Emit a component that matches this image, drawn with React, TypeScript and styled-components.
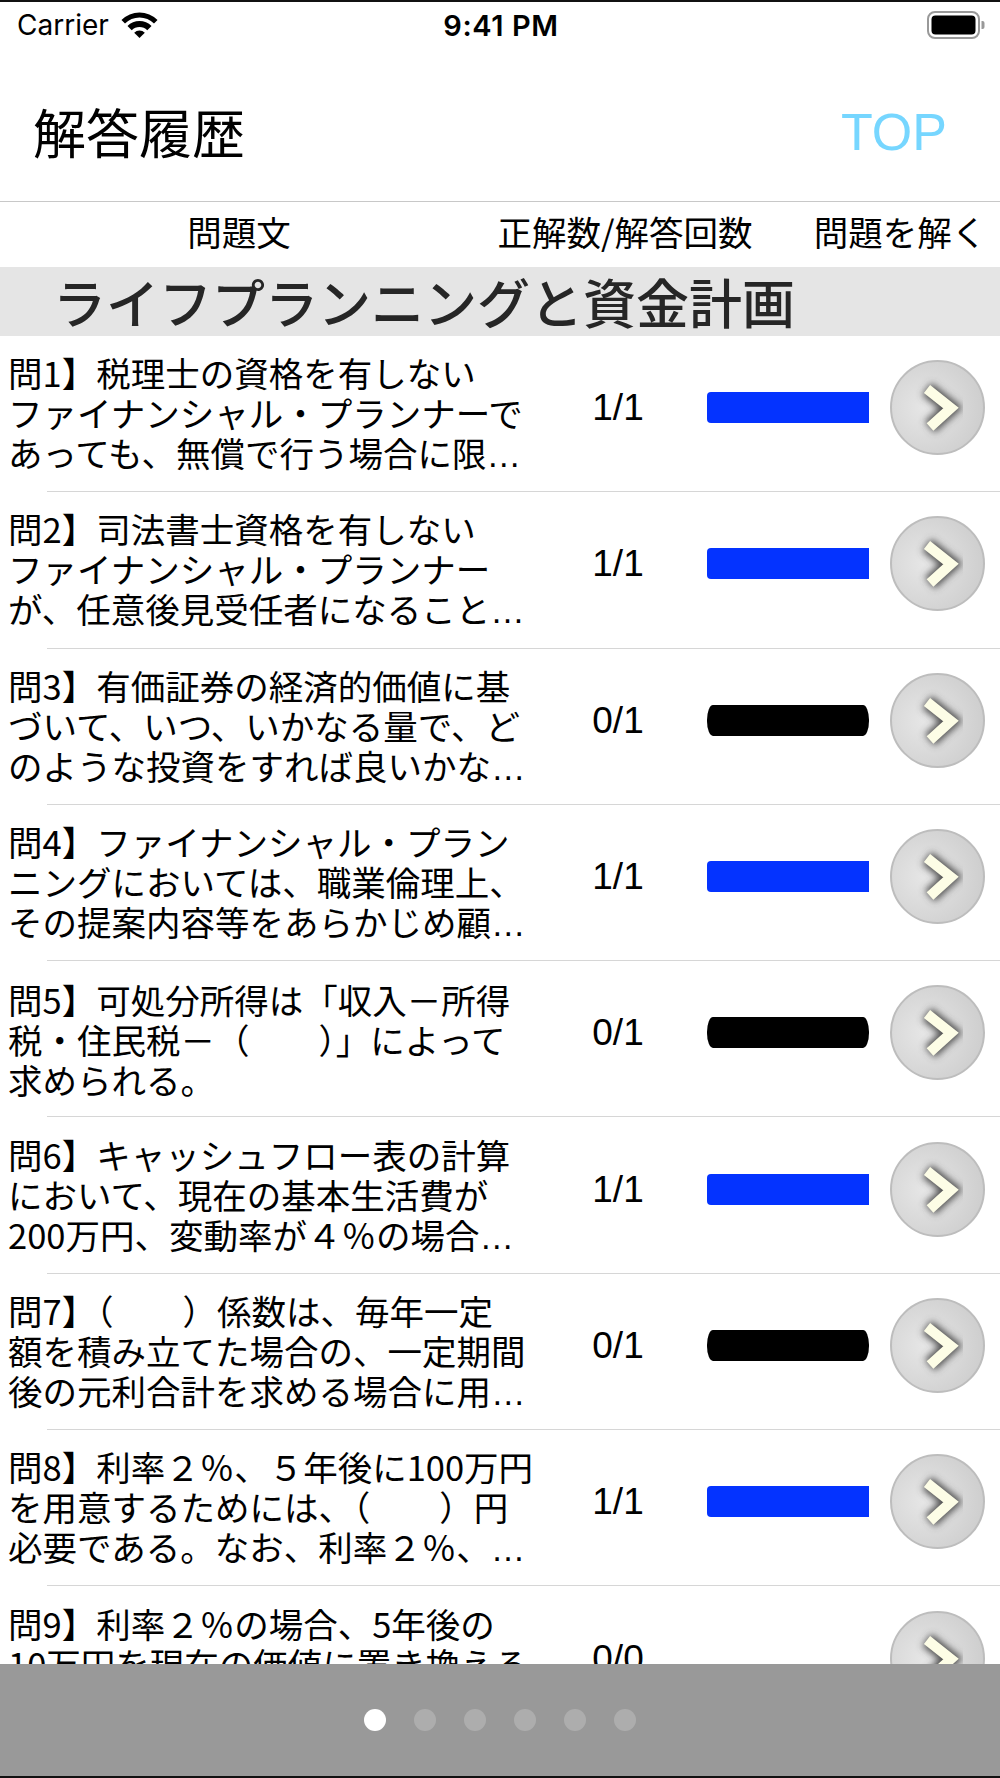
import React from "react";
import styled, { createGlobalStyle } from "styled-components";

const JP_FONT = `"Noto Sans CJK JP", "Noto Sans", sans-serif`;
const UI_FONT = `Inter, "Liberation Sans", sans-serif`;
const NUM_FONT = `"Liberation Sans", Arial, sans-serif`;

const ELLIPSIS = "…";

const Colors = {
  FRAME: "#111111",
  TEXT: "#000000",
  SECTION_TEXT: "#262626",
  SECTION_BG: "#e5e5e5",
  NAV_LINE: "#c8c8c8",
  ROW_LINE: "#d6d6d6",
  SKY: "#76d6ff",
  BLUE: "#0433ff",
  BLACK: "#000000",
  PAGER_BG: "#999999",
  DOT: "rgba(255, 255, 255, 0.2)",
  DOT_ACTIVE: "#ffffff",
};

type Question = {
  lines: string[];
  correct: number;
  answered: number;
};

const QUESTIONS: Question[] = [
  {
    lines: [
      "問1】税理士の資格を有しない",
      "ファイナンシャル・プランナーで",
      "あっても、無償で行う場合に限…",
    ],
    correct: 1,
    answered: 1,
  },
  {
    lines: [
      "問2】司法書士資格を有しない",
      "ファイナンシャル・プランナー",
      "が、任意後見受任者になること…",
    ],
    correct: 1,
    answered: 1,
  },
  {
    lines: [
      "問3】有価証券の経済的価値に基",
      "づいて、いつ、いかなる量で、ど",
      "のような投資をすれば良いかな…",
    ],
    correct: 0,
    answered: 1,
  },
  {
    lines: [
      "問4】ファイナンシャル・プラン",
      "ニングにおいては、職業倫理上、",
      "その提案内容等をあらかじめ顧…",
    ],
    correct: 1,
    answered: 1,
  },
  {
    lines: [
      "問5】可処分所得は「収入－所得",
      "税・住民税－（　　）」によって",
      "求められる。",
    ],
    correct: 0,
    answered: 1,
  },
  {
    lines: [
      "問6】キャッシュフロー表の計算",
      "において、現在の基本生活費が",
      "200万円、変動率が４％の場合…",
    ],
    correct: 1,
    answered: 1,
  },
  {
    lines: [
      "問7】（　　）係数は、毎年一定",
      "額を積み立てた場合の、一定期間",
      "後の元利合計を求める場合に用…",
    ],
    correct: 0,
    answered: 1,
  },
  {
    lines: [
      "問8】利率２％、５年後に100万円",
      "を用意するためには、（　　）円",
      "必要である。なお、利率２％、…",
    ],
    correct: 1,
    answered: 1,
  },
  {
    lines: [
      "問9】利率２％の場合、5年後の",
      "10万円を現在の価値に置き換える",
      "ときに用いる係数は（　　）…",
    ],
    correct: 0,
    answered: 0,
  },
];

const PAGE_COUNT = 6;

const GlobalStyle = createGlobalStyle`
  html, body {
    margin: 0;
    padding: 0;
    background: #ffffff;
  }

  * {
    box-sizing: border-box;
  }
`;

const Screen = styled.div`
  width: 1000px;
  height: 1778px;
  display: flex;
  flex-direction: column;
  overflow: hidden;
  background: #ffffff;
  border-top: 2px solid ${Colors.FRAME};
  border-bottom: 2px solid ${Colors.FRAME};
`;

const StatusBar = styled.div`
  height: 46px;
  flex: none;
  display: grid;
  grid-template-columns: 1fr auto 1fr;
  align-items: center;
  padding: 0 15px 0 17px;
  font-family: ${UI_FONT};
  color: ${Colors.TEXT};
`;

const Carrier = styled.div`
  display: flex;
  align-items: center;
  gap: 12px;
  font-size: 28px;
  line-height: 1;
`;

const Clock = styled.div`
  font-size: 29px;
  font-weight: 600;
  letter-spacing: 0.6px;
  line-height: 1;
`;

const Battery = styled.div`
  justify-self: end;
  display: flex;
  align-items: center;
`;

const NavBar = styled.div`
  height: 154px;
  flex: none;
  display: flex;
  align-items: center;
  justify-content: space-between;
  padding: 14px 53px 0 33px;
  border-bottom: 1px solid ${Colors.NAV_LINE};
`;

const Title = styled.h1`
  margin: 0;
  font-family: ${JP_FONT};
  font-size: 53px;
  font-weight: 400;
  line-height: 1;
  color: ${Colors.TEXT};
`;

const TopLink = styled.a`
  font-family: ${NUM_FONT};
  font-size: 52px;
  line-height: 1;
  color: ${Colors.SKY};
  text-decoration: none;
`;

const ColumnHeader = styled.div`
  height: 65px;
  flex: none;
  display: grid;
  grid-template-columns: 478px 294px 1fr;
  align-items: center;
  padding-bottom: 6px;
  font-family: ${JP_FONT};
  font-size: 34.5px;
  line-height: 1;
  color: ${Colors.TEXT};
`;

const HeaderCell = styled.div<{ $inset?: number }>`
  padding-left: ${(p) => p.$inset ?? 0}px;
  text-align: center;
  white-space: nowrap;
`;

const SectionBand = styled.div`
  height: 69px;
  flex: none;
  display: flex;
  align-items: center;
  padding-left: 53px;
  background: ${Colors.SECTION_BG};
  font-family: ${JP_FONT};
  font-size: 53px;
  font-weight: 500;
  line-height: 1;
  color: ${Colors.SECTION_TEXT};
`;

const List = styled.div`
  flex: 1;
  overflow: hidden;
`;

const Row = styled.div`
  height: 155.3px;
  display: flex;
  align-items: center;
`;

const Divider = styled.div`
  height: 1px;
  margin-left: 47px;
  background: ${Colors.ROW_LINE};
`;

const QuestionText = styled.div`
  width: 557px;
  flex: none;
  padding-left: 8px;
  display: flex;
  flex-direction: column;
  font-family: ${JP_FONT};
  font-size: 34.5px;
  line-height: 40px;
  color: ${Colors.TEXT};
`;

const TextLine = styled.span`
  white-space: nowrap;
`;

// iOS truncation dots sit on the baseline, the CJK glyph centres them
const Ellipsis = styled.span`
  font-family: ${NUM_FONT};
`;

const RowMeta = styled.div`
  display: flex;
  align-items: center;
  padding-bottom: 12px;
`;

const Count = styled.div`
  width: 122px;
  text-align: center;
  font-family: ${NUM_FONT};
  font-size: 37px;
  line-height: 1;
  color: ${Colors.TEXT};
`;

const ScoreBar = styled.div<{ $tone: "right" | "wrong" | "none" }>`
  width: 162px;
  height: 31px;
  margin-left: 28px;
  background: ${(p) =>
    p.$tone === "right"
      ? Colors.BLUE
      : p.$tone === "wrong"
        ? Colors.BLACK
        : "transparent"};
  border-radius: ${(p) => (p.$tone === "right" ? "4px 0 0 4px" : "6px / 15px")};
`;

const GoButton = styled.button`
  width: 95px;
  height: 95px;
  margin-left: 21px;
  padding: 0;
  display: grid;
  place-items: center;
  border-radius: 50%;
  border: 2px solid #bdbdbd;
  background: radial-gradient(
    circle at 35% 50%,
    #e6e6e6 0%,
    #d6d6d6 55%,
    #c8c8c8 100%
  );
  cursor: pointer;
`;

const Pager = styled.div`
  height: 112px;
  flex: none;
  display: flex;
  align-items: center;
  justify-content: center;
  gap: 28px;
  background: ${Colors.PAGER_BG};
`;

const PagerDot = styled.span<{ $active?: boolean }>`
  width: 22px;
  height: 22px;
  border-radius: 50%;
  background: ${(p) => (p.$active ? Colors.DOT_ACTIVE : Colors.DOT)};
`;

function WifiIcon() {
  return (
    <svg width="37" height="27" viewBox="0 0 37 27">
      <path d="M18.5 26 L13.2 20.7 A7.5 7.5 0 0 1 23.8 20.7 Z" fill="#000" />
      <path
        d="M6.48 13.98 A17 17 0 0 1 30.52 13.98 L26.28 18.22 A11 11 0 0 0 10.72 18.22 Z"
        fill="#000"
      />
      <path
        d="M0.47 7.97 A25.5 25.5 0 0 1 36.53 7.97 L33 11.5 A20.5 20.5 0 0 0 4 11.5 Z"
        fill="#000"
      />
    </svg>
  );
}

function BatteryIcon() {
  return (
    <svg width="58" height="28" viewBox="0 0 58 28">
      <rect
        x="1"
        y="1"
        width="51"
        height="26"
        rx="7"
        fill="none"
        stroke="#999"
        strokeWidth="2"
      />
      <rect x="4.5" y="4.5" width="44" height="19" rx="4" fill="#000" />
      <path d="M54.5 10 h1 a2 2 0 0 1 2 2 v4 a2 2 0 0 1 -2 2 h-1 Z" fill="#999" />
    </svg>
  );
}

function ChevronIcon() {
  return (
    <svg width="91" height="91" viewBox="0 0 91 91">
      <defs>
        <filter id="go-glow" x="-50%" y="-50%" width="200%" height="200%">
          <feGaussianBlur stdDeviation="3.5" />
        </filter>
      </defs>
      <polyline
        points="35,27 59,46 38,65"
        fill="none"
        stroke="#4d4d4d"
        strokeWidth="15"
        filter="url(#go-glow)"
      />
      <polyline
        points="35,27 59,46 38,65"
        fill="none"
        stroke="#fdfde6"
        strokeWidth="10"
        strokeLinejoin="miter"
      />
    </svg>
  );
}

function QuestionLine({ line }: { line: string }) {
  if (!line.endsWith(ELLIPSIS)) {
    return <TextLine>{line}</TextLine>;
  }

  return (
    <TextLine>
      {line.slice(0, -1)}
      <Ellipsis>{ELLIPSIS}</Ellipsis>
    </TextLine>
  );
}

function QuestionRow({ question }: { question: Question }) {
  const tone =
    question.answered === 0
      ? "none"
      : question.correct > 0
        ? "right"
        : "wrong";

  return (
    <>
      <Row>
        <QuestionText>
          {question.lines.map((line) => (
            <QuestionLine key={line} line={line} />
          ))}
        </QuestionText>
        <RowMeta>
          <Count>
            {question.correct}/{question.answered}
          </Count>
          <ScoreBar $tone={tone} />
          <GoButton type="button" aria-label="問題を解く">
            <ChevronIcon />
          </GoButton>
        </RowMeta>
      </Row>
      <Divider />
    </>
  );
}

export default function App() {
  return (
    <>
      <GlobalStyle />
      <Screen>
        <StatusBar>
          <Carrier>
            Carrier
            <WifiIcon />
          </Carrier>
          <Clock>9:41 PM</Clock>
          <Battery>
            <BatteryIcon />
          </Battery>
        </StatusBar>
        <NavBar>
          <Title>解答履歴</Title>
          <TopLink href="#">TOP</TopLink>
        </NavBar>
        <ColumnHeader>
          <HeaderCell>問題文</HeaderCell>
          <HeaderCell>正解数/解答回数</HeaderCell>
          <HeaderCell $inset={28}>問題を解く</HeaderCell>
        </ColumnHeader>
        <SectionBand>ライフプランニングと資金計画</SectionBand>
        <List>
          {QUESTIONS.map((question) => (
            <QuestionRow key={question.lines[0]} question={question} />
          ))}
        </List>
        <Pager>
          {Array.from({ length: PAGE_COUNT }, (_, index) => (
            <PagerDot key={index} $active={index === 0} />
          ))}
        </Pager>
      </Screen>
    </>
  );
}
